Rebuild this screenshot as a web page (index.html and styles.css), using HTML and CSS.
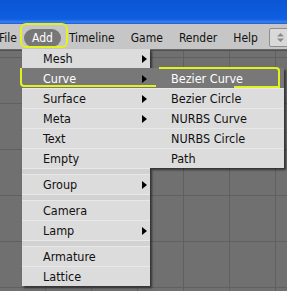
FILE: index.html
```html
<!DOCTYPE html>
<html lang="en">
<head>
    <meta charset="UTF-8">
    <title>Add Menu</title>
    <link rel="stylesheet" href="styles.css">
</head>
<body>
    <div class="titlebar"></div>

    <!-- Header menu bar -->
    <div class="menubar">
        <span class="menu-item file">File</span>
        <span class="menu-item active">Add</span>
        <span class="menu-item">Timeline</span>
        <span class="menu-item">Game</span>
        <span class="menu-item">Render</span>
        <span class="menu-item">Help</span>
        <span class="screen-btn">
            <svg width="9" height="11" viewBox="0 0 9 11"><path d="M1 4.5 L4.5 1 L8 4.5 Z M1 6.5 L4.5 10 L8 6.5 Z" fill="#8a8a8a"/></svg>
        </span>
    </div>

    <!-- 3D viewport grid -->
    <div class="viewport"></div>

    <!-- Add dropdown -->
    <ul class="dropdown main-menu">
        <li class="sub first">Mesh</li>
        <li class="sub selected">Curve</li>
        <li class="sub">Surface</li>
        <li class="sub">Meta</li>
        <li>Text</li>
        <li>Empty</li>
        <li class="sep"></li>
        <li class="sub">Group</li>
        <li class="sep"></li>
        <li>Camera</li>
        <li class="sub">Lamp</li>
        <li class="sep"></li>
        <li>Armature</li>
        <li>Lattice</li>
    </ul>

    <!-- Curve submenu -->
    <ul class="dropdown sub-menu">
        <li class="selected">Bezier Curve</li>
        <li>Bezier Circle</li>
        <li>NURBS Curve</li>
        <li>NURBS Circle</li>
        <li>Path</li>
    </ul>

    <!-- hand drawn yellow marks -->
    <div class="mark mark-add"></div>
    <div class="mark mark-curve"></div>
    <div class="mark mark-bezier"></div>
    <div class="mark mark-bezier-low"></div>
</body>
</html>
```

FILE: styles.css
```css
body {
    margin: 0;
    width: 287px;
    height: 291px;
    overflow: hidden;
    position: relative;
    font-family: "DejaVu Sans Condensed", "DejaVu Sans", sans-serif;
    font-size: 12.5px;
    background: #707070;
}
.titlebar {
    height: 24px;
    background: linear-gradient(#0a55d4 0%, #0f5fe0 80%, #3c82ee 92%, #1a5bd0 100%);
}
.menubar {
    display: flex;
    align-items: center;
    padding-top: 2px;
    box-sizing: border-box;
    height: 26px;
    background: #c6c6c6;
    border-bottom: 1px solid #6a6a6a;
    color: #111;
    font-size: 12px;
}
.menu-item {
    padding: 2px 8px;
    line-height: 14px;
}
.menu-item.file {
    margin-left: -1px;
    padding-left: 0;
    padding-right: 7px;
}
.menu-item.active {
    background: #777;
    color: #fff;
    border-radius: 9px;
    padding: 2px 8px;
}
.screen-btn {
    margin-left: 3px;
    width: 22px;
    height: 17px;
    background: #d9d9d9;
    border: 1px solid #8e8e8e;
    border-radius: 2px;
    display: flex;
    align-items: center;
    justify-content: center;
    flex-shrink: 0;
}
.viewport {
    height: 240px;
    background-color: #707070;
    background-image:
        linear-gradient(90deg, #606060 1px, transparent 1px),
        linear-gradient(#606060 1px, transparent 1px);
    background-size: 46px 46px;
    background-position: 45px 6px;
    border-top: 1px solid #505050;
}
.dropdown {
    position: absolute;
    margin: 0;
    padding: 0;
    list-style: none;
    background: #dcdcdc;
    box-shadow: 2px 2px 2px rgba(0, 0, 0, 0.55);
}
.dropdown li {
    height: 19px;
    line-height: 20px;
    padding-left: 21px;
    border-top: 1px solid #e8e8e8;
    position: relative;
    color: #111;
}
.dropdown li.first {
    border-top: none;
}
.dropdown li.sep {
    height: 5px;
    background: #d2d2d2;
    border-top: 1px solid #e8e8e8;
}
.dropdown li.selected {
    background: #787878;
    color: #fff;
    border-top-color: #787878;
}
.dropdown li.sub::after {
    content: "";
    position: absolute;
    right: 3px;
    top: 6px;
    border-left: 5px solid #000;
    border-top: 4px solid transparent;
    border-bottom: 4px solid transparent;
}
.main-menu {
    left: 22px;
    top: 49px;
    width: 128px;
}
.sub-menu {
    left: 150px;
    top: 68px;
    width: 134px;
}
.mark {
    position: absolute;
    border: 0 solid #e2f21c;
}
.mark-add {
    left: 20px;
    top: 23px;
    width: 44px;
    height: 21px;
    border-width: 2px;
    border-radius: 6px;
}
.mark-curve {
    left: 20px;
    top: 68px;
    width: 134px;
    height: 17px;
    border-left-width: 2px;
    border-bottom-width: 2px;
    border-bottom-left-radius: 4px;
}
.mark-bezier {
    left: 159px;
    top: 67px;
    width: 119px;
    height: 19px;
    border-top-width: 2px;
    border-right-width: 2px;
    border-top-right-radius: 4px;
}
.mark-bezier-low {
    left: 234px;
    top: 86px;
    width: 46px;
    height: 0;
    border-bottom-width: 2px;
}
```
